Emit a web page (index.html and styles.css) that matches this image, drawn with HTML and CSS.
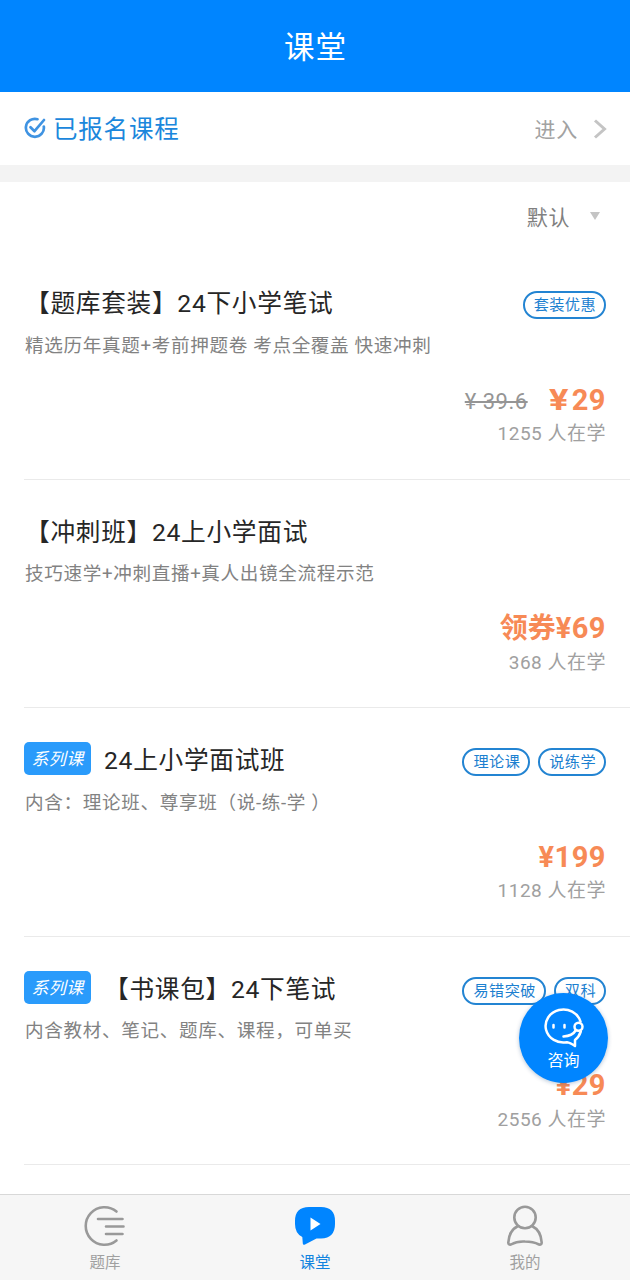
FILE: index.html
```html
<!DOCTYPE html>
<html lang="zh-CN">
<head>
<meta charset="utf-8">
<title>课堂</title>
<link rel="stylesheet" href="styles.css">
</head>
<body>
<div class="app">
  <header class="header">课堂</header>
  <section class="enrolled">
    <svg class="check" viewBox="0 0 22 22"><path d="M13.500 2.200A9 9 0 1 0 19.800 9.500"/><path d="M6.500 10.200l4 4L20 3"/></svg>
    <span class="enrolled-title">已报名课程</span>
    <span class="enter">进入</span>
    <svg class="chevron" viewBox="0 0 14 20"><path d="M2 1.500l9.500 8.500L2 18.500"/></svg>
  </section>
  <div class="sort"><span>默认</span><i class="caret"></i></div>
  <main class="list">
    <article class="card">
      <div class="title-row"><h2 class="title">【题库套装】24下小学笔试</h2><span class="tag">套装优惠</span></div>
      <p class="desc">精选历年真题+考前押题卷 考点全覆盖 快速冲刺</p>
      <div class="price-row"><del class="old">¥ 39.6</del><b class="price"><span class="wide-yen">¥</span>29</b></div>
      <p class="count">1255 人在学</p>
    </article>
    <article class="card">
      <div class="title-row"><h2 class="title">【冲刺班】24上小学面试</h2></div>
      <p class="desc">技巧速学+冲刺直播+真人出镜全流程示范</p>
      <div class="price-row"><b class="price"><span class="coupon">领券</span>¥69</b></div>
      <p class="count">368 人在学</p>
    </article>
    <article class="card">
      <div class="title-row"><span class="series">系列课</span><h2 class="title">24上小学面试班</h2><span class="tag">理论课</span><span class="tag">说练学</span></div>
      <p class="desc">内含：理论班、尊享班（说-练-学 ）</p>
      <div class="price-row"><b class="price">¥199</b></div>
      <p class="count">1128 人在学</p>
    </article>
    <article class="card">
      <div class="title-row"><span class="series">系列课</span><h2 class="title">【书课包】24下笔试</h2><span class="tag">易错突破</span><span class="tag">双科</span></div>
      <p class="desc">内含教材、笔记、题库、课程，可单买</p>
      <div class="price-row"><b class="price">¥29</b></div>
      <p class="count">2556 人在学</p>
    </article>
  </main>
  <nav class="tabs">
    <a class="tab">
      <svg class="tab-icon" viewBox="0 0 42 42"><path d="M32.500 6.500A18.800 18.800 0 1 0 32.500 35.500M14 14h24.500M22 21.500h17.500M22 29h16.500"/></svg>
      <span>题库</span>
    </a>
    <a class="tab active">
      <svg class="tab-icon" viewBox="0 0 42 42"><path class="bubble" d="M15 2h12q14 0 14 14v3q0 14-14 14.500h-4.500L11 39.500q-2 1-2.200-1L8.300 32Q1 28.500 1 19v-3Q1 2 15 2z"/><path class="play" d="M16.500 12.500v13l10-6.500z"/></svg>
      <span>课堂</span>
    </a>
    <a class="tab">
      <svg class="tab-icon" viewBox="0 0 42 42"><circle cx="21" cy="12.500" r="10.700"/><path d="M14 21C8 24 4.700 30 4.300 37.500Q4.300 40 7 39.500Q13 36 21 36.500Q29 36.500 35 39.500Q37.700 40 37.700 37.500C37.300 30 34 24 28 21"/></svg>
      <span>我的</span>
    </a>
  </nav>
  <a class="consult">
    <svg class="consult-icon" viewBox="0 0 40 40"><path d="M36.500 13.500A17.800 16.500 0 1 0 23 34.200Q26 34.500 31 38L31 32Q35 29 36.800 23.500"/><path d="M9.500 17v2.500M20.500 17v2.500"/><circle cx="34.500" cy="18.800" r="4"/><path d="M32 22Q28.500 28 19.500 28.500"/></svg>
    <span>咨询</span>
  </a>
</div>
</body>
</html>
```
FILE: styles.css
```css
* { box-sizing: border-box; }
body { margin: 0; background: #fff; font-family: Roboto, "Noto Sans CJK SC", sans-serif; }
svg { display: block; fill: none; stroke-linecap: round; stroke-linejoin: round; }
h2, p { margin: 0; font-weight: 400; }
.app { position: relative; display: flex; flex-direction: column; width: 630px; height: 1280px; overflow: hidden; }
.header { flex: none; height: 92px; padding: 3px 0 0 1px; background: #0085ff; color: #fff; font-size: 30.500px; line-height: 90px; letter-spacing: 1px; text-align: center; }
.enrolled { flex: none; display: flex; align-items: center; height: 90px; padding: 0 24px; border-bottom: 17px solid #f3f3f3; }
.check { width: 22px; height: 22px; margin-top: -1px; stroke: #3f93e2; stroke-width: 2.700; }
.enrolled-title { margin: 2px 0 0 7px; color: #1b87dc; font-size: 24.500px; letter-spacing: .8px; line-height: 36px; }
.enter { margin: -1px 0 0 auto; color: #a2a2a2; font-size: 21px; letter-spacing: .7px; }
.chevron { width: 14px; height: 20px; margin: 0 -1px 0 15px; stroke: #c4c4c4; stroke-width: 3; stroke-linecap: butt; stroke-linejoin: miter; }
.sort { flex: none; display: flex; align-items: center; justify-content: flex-end; height: 69px; padding: 0 30px 2px 0; color: #808080; font-size: 21px; letter-spacing: .6px; }
.caret { margin-left: 20px; border: 5.500px solid transparent; border-top: 8px solid #c4c4c4; border-bottom: 0; }
.list { flex: 1; min-height: 0; padding-left: 24px; overflow: hidden; }
.card { height: 228.500px; padding: 34px 24px 0 0; border-bottom: 1px solid #eaeaea; }
.title-row { display: flex; align-items: center; height: 38px; }
.title { margin: 0 auto 0 0; padding-left: 1px; color: #262626; font-size: 24.700px; letter-spacing: .7px; line-height: 38px; white-space: nowrap; }
.series { width: 67px; height: 33px; margin: -5px 12px 0 0; border-radius: 5px; background: #2a9bfb; color: #fff; font-size: 17px; font-style: italic; line-height: 34px; letter-spacing: .4px; text-align: center; }
.tag { height: 28px; margin: 2px 0 0 8px; padding: 0 8px 0 9px; border: 2px solid #2384d2; border-radius: 14px; color: #1c80d0; font-size: 15.200px; letter-spacing: .4px; line-height: 25px; white-space: nowrap; }
.desc { margin-top: 8.500px; padding-left: 1px; color: #828282; font-size: 18.600px; letter-spacing: .65px; line-height: 28px; white-space: nowrap; }
.price-row { display: flex; align-items: center; justify-content: flex-end; height: 40px; margin-top: 20px; }
.price { color: #f78a56; font-size: 29px; letter-spacing: .5px; line-height: 40px; }
.coupon { font-size: 28px; letter-spacing: 0; }
.wide-yen { display: inline-block; margin-right: 5px; transform: scaleX(1.25); }
.old { margin-right: 23px; padding-top: 4px; color: #959595; font-size: 22px; letter-spacing: .5px; }
.count { padding-top: .5px; color: #a0a0a0; font-size: 19px; letter-spacing: .5px; line-height: 28px; text-align: right; }
.tabs { flex: none; display: grid; grid-template-columns: repeat(3, 1fr); height: 86px; border-top: 1px solid #d8d8d8; background: #f6f6f6; }
.tab { display: flex; flex-direction: column; align-items: center; padding-top: 10px; color: #a0a0a0; font-size: 15.500px; line-height: 22px; }
.tab-icon { width: 42px; height: 42px; margin-bottom: 5px; stroke: #999; stroke-width: 2.600; }
.active { color: #1284df; }
.bubble { fill: #0085ff; stroke: none; }
.play { fill: #fff; stroke: none; }
.consult { position: absolute; left: 519px; top: 993px; display: flex; flex-direction: column; align-items: center; width: 89px; height: 90px; padding-top: 15px; border-radius: 50%; background: #0085ff; box-shadow: 0 1px 4px rgba(0, 60, 120, .3); color: #fff; font-size: 16px; line-height: 22px; }
.consult-icon { width: 40px; height: 40px; margin-bottom: 2px; stroke: #fff; stroke-width: 2.500; }
```
